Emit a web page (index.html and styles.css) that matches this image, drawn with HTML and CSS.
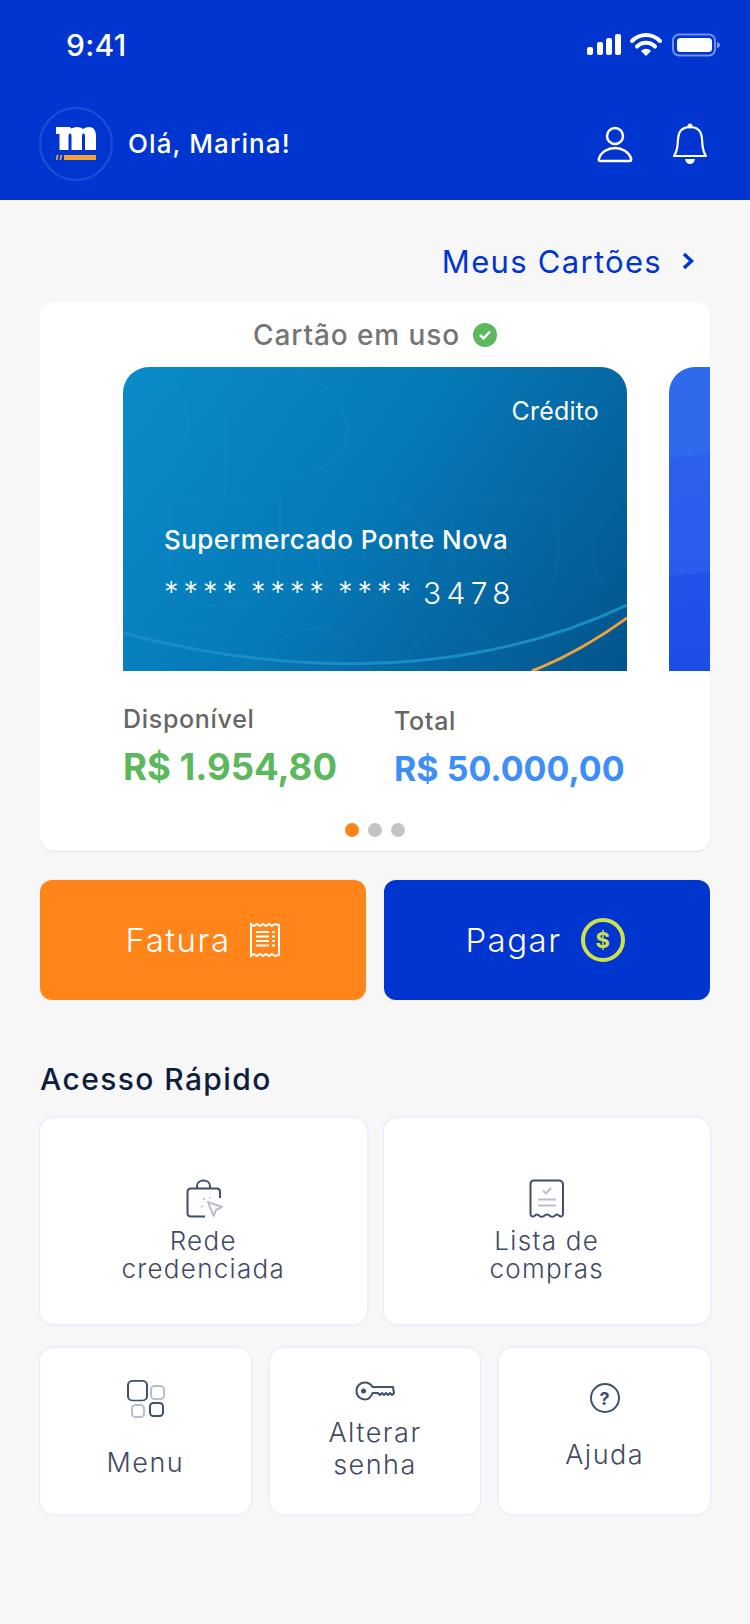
FILE: index.html
```html
<!DOCTYPE html>
<html lang="pt-BR">
<head>
    <meta charset="UTF-8">
    <meta name="viewport" content="width=device-width, initial-scale=1.0">
    <title>Início</title>
    <link rel="stylesheet" href="styles.css">
</head>
<body>

    <header class="topo">
        <div class="status">
            <span class="hora">9:41</span>
            <svg class="status-icons" width="134" height="24" viewBox="0 0 134 24">
                <rect x="1" y="14" width="6" height="8" rx="2" fill="#fff"/>
                <rect x="11" y="9" width="6" height="13" rx="2" fill="#fff"/>
                <rect x="20" y="5" width="6" height="17" rx="2" fill="#fff"/>
                <rect x="29" y="1" width="6" height="21" rx="2" fill="#fff"/>
                <path d="M46 8 C54 0 66 0 74 8" fill="none" stroke="#fff" stroke-width="4" stroke-linecap="round"/>
                <path d="M51 13.5 C56 8.5 64 8.5 69 13.5" fill="none" stroke="#fff" stroke-width="4" stroke-linecap="round"/>
                <path d="M55 18 C58 15 62 15 65 18 L60 23 Z" fill="#fff"/>
                <rect x="87" y="1.5" width="42" height="21" rx="6" fill="none" stroke="#fff" stroke-opacity=".45" stroke-width="2"/>
                <rect x="91" y="5" width="35" height="14" rx="3.5" fill="#fff"/>
                <path d="M131 9 C133 9.5 134 10.5 134 12 C134 13.5 133 14.5 131 15 Z" fill="#fff" fill-opacity=".5"/>
            </svg>
        </div>
        <div class="topo-linha">
            <div class="logo">
                <svg width="40" height="33" viewBox="0 0 40 33">
                    <path d="M0 0 H14 L15 1.500 C17 .5 19 0 21 0 C23.500 0 25.500 .8 27 2 C29 .7 31 0 33 0 C38 0 40 4 40 9 V23 H29 V9.500 C29 7.500 28.500 6.500 27.500 6.500 C26.500 6.500 26 7.500 26 9.500 V23 H15.500 V9.500 C15.500 7.500 15 6.500 14 6.500 C13 6.500 12.500 7.500 12.500 9.500 V23 H3.500 V7 H0 Z" fill="#fff"/>
                    <rect x="8" y="28" width="32" height="5" fill="#f5a23a"/>
                    <path d="M0.500 28 H2.500 L1.500 33 H0 Z M4.500 28 H6.500 L5 33 H3.500 Z" fill="#f5a23a"/>
                </svg>
            </div>
            <span class="ola">Olá, Marina!</span>
            <svg class="ic-perfil" width="36" height="38" viewBox="0 0 36 38">
                <circle cx="18" cy="11" r="8" fill="none" stroke="#fff" stroke-width="2.500"/>
                <path d="M3.500 36 H32.500 C34 36 34.500 35 34 33.500 C32 27 25 23 18 23 C11 23 4 27 2 33.500 C1.500 35 2 36 3.500 36 Z" fill="none" stroke="#fff" stroke-width="2.500"/>
            </svg>
            <svg class="ic-sino" width="36" height="42" viewBox="0 0 36 42">
                <path d="M2 33 H34 C30 27 30.500 22 30 16 C29.500 8 25 4 18 4 C11 4 6.500 8 6 16 C5.500 22 6 27 2 33 Z" fill="none" stroke="#fff" stroke-width="2.200" stroke-linejoin="round"/>
                <circle cx="18" cy="3" r="2.500" fill="#fff"/>
                <path d="M13 36 H23 C22.500 39.500 20.500 41 18 41 C15.500 41 13.500 39.500 13 36 Z" fill="#fff"/>
            </svg>
        </div>
    </header>

    <main class="conteudo">
        <div class="meus-cartoes">
            <span>Meus Cartões</span>
            <svg width="14" height="20" viewBox="0 0 14 20">
                <path d="M3 3 L10.500 10 L3 17" fill="none" stroke="#0035cf" stroke-width="3.500"/>
            </svg>
        </div>

        <section class="painel">
            <div class="em-uso">
                <span>Cartão em uso</span>
                <span class="ok">
                    <svg width="14" height="12" viewBox="0 0 14 12">
                        <path d="M2 6 L5.500 9.500 L12 2.500" fill="none" stroke="#fff" stroke-width="2.500"/>
                    </svg>
                </span>
            </div>

            <div class="carrossel">
                <div class="cartao">
                    <svg class="cartao-fundo" width="504" height="304" viewBox="0 0 504 304">
                        <g fill="none" stroke="#fff" stroke-opacity=".018" stroke-width="2">
                            <circle cx="-2" cy="57" r="66"/>
                            <path d="M102 130 V60 C102 25 130 6 165 6 C200 6 224 40 224 60 C224 90 200 108 165 108"/>
                            <path d="M47 131 H157 V190 C157 220 135 240 102 240 C70 240 47 220 47 190 Z"/>
                            <circle cx="250" cy="186" r="55"/>
                            <path d="M329 131 H435 V190 C435 220 410 240 382 240 C350 240 329 220 329 190 Z"/>
                            <circle cx="525" cy="186" r="55"/>
                            <path d="M22 290 C40 250 85 250 104 290 M145 290 C165 250 225 250 244 304 M285 290 C300 250 355 250 374 285"/>
                        </g>
                        <path d="M0 266 C120 298 320 325 504 238" fill="none" stroke="#1b8cc4" stroke-width="3"/>
                        <path d="M409 304 C445 290 475 272 504 251" fill="none" stroke="#f0a33c" stroke-width="3"/>
                    </svg>
                    <span class="tipo">Crédito</span>
                    <span class="nome">Supermercado Ponte Nova</span>
                    <div class="numero">
                        <span class="estrelas">****</span>
                        <span class="estrelas">****</span>
                        <span class="estrelas">****</span>
                        <span class="final">3478</span>
                    </div>
                </div>
                <div class="cartao cartao-prox"></div>
            </div>

            <div class="valores">
                <div class="valor-disp">
                    <div class="valor-label">Disponível</div>
                    <div class="valor-num verde">R$ 1.954,80</div>
                </div>
                <div class="valor-total">
                    <div class="valor-label">Total</div>
                    <div class="valor-num azul">R$ 50.000,00</div>
                </div>
            </div>

            <div class="pontos">
                <span class="ponto ativo"></span>
                <span class="ponto"></span>
                <span class="ponto"></span>
            </div>
        </section>

        <div class="botoes">
            <button type="button" class="botao laranja">
                <span>Fatura</span>
                <svg width="32" height="36" viewBox="0 0 32 36">
                    <path d="M2 2 L5 4 L8 2 L11 4 L14 2 L17 4 L20 2 L23 4 L26 2 L30 3 V33 L26 34 L23 32 L20 34 L17 32 L14 34 L11 32 L8 34 L5 32 L2 34 Z" fill="none" stroke="#fff" stroke-width="2"/>
                    <path d="M7 10 H20 M7 14.500 H20 M7 19 H20 M7 23.500 H20 M23 10 H26 M23 14.500 H26 M23 19 H26 M23 23.500 H26" stroke="#fff" stroke-width="2"/>
                </svg>
            </button>
            <button type="button" class="botao azul-escuro">
                <span>Pagar</span>
                <span class="moeda">$</span>
            </button>
        </div>

        <h2 class="acesso">Acesso Rápido</h2>

        <div class="grade-dois">
            <a class="bloco bloco-alto">
                <svg class="ic-sacola" width="38" height="40" viewBox="0 0 38 40">
                    <path d="M11 10 V7 C11 3.500 14 1.500 17.500 1.500 C21 1.500 24 3.500 24 7 V10" fill="none" stroke="#3f4f6d" stroke-width="2"/>
                    <path d="M34 19 V13 C34 11 33 9.500 31 9.500 H5 C3 9.500 1.500 11 1.500 13 V34 C1.500 36 3 37.500 5 37.500 H19" fill="none" stroke="#3f4f6d" stroke-width="2"/>
                    <path d="M22 23 L36 28 L30 31 L27.500 37 Z" fill="none" stroke="#b9bfcc" stroke-width="2" stroke-linejoin="round"/>
                    <path d="M17 19 L19 21 M24 18 V19.500 M15 28 L17 27" stroke="#b9bfcc" stroke-width="1.500"/>
                </svg>
                <span class="bloco-texto">Rede<br>credenciada</span>
            </a>
            <a class="bloco bloco-alto">
                <svg width="36" height="40" viewBox="0 0 36 40">
                    <path d="M1.500 5 C1.500 3 3 1.500 5 1.500 H30 C32 1.500 34 3 34 5 V35 C34 37.500 31.500 38 30.500 37 C28.500 35 27 35 25.500 37 C24 38 22.500 38 21 37 C19.500 35 17 35 15 37 C13.500 38 12 38 10.500 37 C9 35 7 35 5.500 37 C4 38 1.500 37.500 1.500 35 Z" fill="none" stroke="#3f4f6d" stroke-width="2"/>
                    <path d="M14 11.500 L17 14.500 L22 9" fill="none" stroke="#b9bfcc" stroke-width="2"/>
                    <path d="M9 20.500 H27 M9 26.500 H27" stroke="#b9bfcc" stroke-width="2"/>
                </svg>
                <span class="bloco-texto">Lista de<br>compras</span>
            </a>
        </div>

        <div class="grade-tres">
            <a class="bloco bloco-menu">
                <svg class="ic-menu" width="38" height="38" viewBox="0 0 38 38">
                    <rect x="1" y="1" width="19" height="24" rx="5" fill="none" stroke="#3f4f6d" stroke-width="2" transform="scale(1 .82)"/>
                    <rect x="24" y="6" width="13" height="13" rx="3.500" fill="none" stroke="#b9bfcc" stroke-width="2"/>
                    <rect x="5" y="25" width="12" height="12" rx="3.500" fill="none" stroke="#b9bfcc" stroke-width="2"/>
                    <rect x="23" y="23" width="13" height="13" rx="3.500" fill="none" stroke="#3f4f6d" stroke-width="2"/>
                </svg>
                <span class="bloco-texto bloco-grande">Menu</span>
            </a>
            <a class="bloco bloco-senha">
                <svg width="40" height="20" viewBox="0 0 40 20">
                    <path d="M1.500 10 C1.500 4.500 5.500 1.500 10 1.500 C13.500 1.500 16 3.500 17.500 6 H38 L39 12 L37 14 L35 12 L33 14 L31 12 L29 14 L27 12 L25 14 L23 12 H17.500 C16 16.500 13.500 18.500 10 18.500 C5.500 18.500 1.500 15.500 1.500 10 Z" fill="none" stroke="#3f4f6d" stroke-width="2" stroke-linejoin="round"/>
                    <circle cx="8.500" cy="10" r="2.500" fill="#3f4f6d"/>
                </svg>
                <span class="bloco-texto bloco-grande">Alterar<br>senha</span>
            </a>
            <a class="bloco bloco-ajuda">
                <span class="ajuda-ic">?</span>
                <span class="bloco-texto bloco-grande">Ajuda</span>
            </a>
        </div>
    </main>

</body>
</html>
```

FILE: styles.css
```css
* {
    box-sizing: border-box;
}

body {
    margin: 0;
    min-height: 1624px;
    background-color: #f7f7f8;
    font-family: Inter, "Noto Sans", sans-serif;
    color: #3f4a63;
}

/* topo azul */
.topo {
    height: 200px;
    background-color: #0035cf;
    padding: 0 29px 0 39px;
}

.status {
    display: flex;
    justify-content: space-between;
    align-items: center;
    height: 90px;
    padding: 0 1px 0 27px;
}

.hora {
    color: white;
    font-size: 30px;
    font-weight: 500;
    letter-spacing: 0.3px;
}

.topo-linha {
    display: flex;
    align-items: center;
    height: 73px;
    margin-top: 17px;
}

.logo {
    width: 74px;
    height: 74px;
    border-radius: 50%;
    border: 2px solid rgba(255, 255, 255, 0.12);
    display: flex;
    justify-content: center;
    align-items: center;
}

.ola {
    flex: 1;
    margin-left: 15px;
    color: white;
    font-size: 26px;
    font-weight: 500;
    letter-spacing: 1.1px;
}

.ic-perfil {
    margin-right: 39px;
}

.ic-sino {
    margin-right: 13px;
}

/* conteudo */
.conteudo {
    padding: 0 40px;
}

.meus-cartoes {
    display: flex;
    justify-content: flex-end;
    align-items: center;
    height: 40px;
    margin-top: 41px;
    padding-right: 15px;
    gap: 19px;
    color: #0035cf;
    font-size: 31px;
    letter-spacing: 1.3px;
}

.painel {
    margin-top: 21px;
    height: 549px;
    background-color: white;
    border-radius: 14px;
    overflow: hidden;
    box-shadow: 0 1px 1px #e4e4e8;
}

.em-uso {
    display: flex;
    justify-content: center;
    align-items: center;
    gap: 13px;
    height: 36px;
    margin-top: 15px;
    color: #757575;
    font-size: 28px;
    font-weight: 500;
    letter-spacing: 0.9px;
}

.ok {
    width: 24px;
    height: 24px;
    border-radius: 50%;
    background-color: #5cb85c;
    display: flex;
    justify-content: center;
    align-items: center;
}

.carrossel {
    display: flex;
    gap: 42px;
    height: 304px;
    margin-top: 14px;
    padding-left: 83px;
}

.cartao {
    position: relative;
    flex: none;
    width: 504px;
    height: 304px;
    padding: 28px 28px 0 41px;
    border-radius: 26px 26px 0 0;
    background: linear-gradient(125deg, #0a8cc9 0%, #067ab8 45%, #03548c 100%);
    color: white;
    display: flex;
    flex-direction: column;
    overflow: hidden;
}

.cartao-prox {
    background: linear-gradient(175deg, #2f69ec 0%, #2f69ec 26%, #2c60ec 26%, #2a5cec 60%, #2252ea 60%, #1d4de8 90%, #173ac6 100%);
}

.cartao-fundo {
    position: absolute;
    top: 0;
    left: 0;
}

.tipo {
    position: relative;
    align-self: flex-end;
    font-size: 25px;
    line-height: 32px;
    letter-spacing: 0.2px;
}

.nome {
    position: relative;
    margin-top: 95px;
    font-size: 26px;
    font-weight: 500;
    line-height: 36px;
    letter-spacing: 0.45px;
}

.numero {
    position: relative;
    display: flex;
    align-items: center;
    margin-top: 16px;
    height: 36px;
    font-weight: 300;
}

.estrelas {
    flex: none;
    width: 72px;
    margin-right: 15px;
    margin-top: -2px;
    font-size: 29px;
    letter-spacing: 5px;
}

.final {
    margin-left: -2px;
    margin-top: 1px;
    font-size: 30px;
    letter-spacing: 5.3px;
}

.valores {
    display: flex;
    margin-top: 32px;
    padding-left: 83px;
}

.valor-disp {
    width: 271px;
}

.valor-total {
    padding-top: 2px;
}

.valor-label {
    color: #666;
    font-size: 25px;
    font-weight: 500;
    line-height: 32px;
    letter-spacing: 0.7px;
}

.valor-num {
    margin-top: 9px;
    font-weight: 700;
    line-height: 46px;
}

.verde {
    color: #5cb85c;
    font-size: 36.5px;
}

.azul {
    color: #3e8ef7;
    font-size: 34px;
}

.pontos {
    display: flex;
    justify-content: center;
    gap: 9px;
    margin-top: 31px;
}

.ponto {
    width: 14px;
    height: 14px;
    border-radius: 50%;
    background-color: #c4c4c4;
}

.ativo {
    background-color: #ff851b;
}

/* botoes */
.botoes {
    display: grid;
    grid-template-columns: 1fr 1fr;
    gap: 18px;
    margin-top: 29px;
}

.botao {
    height: 120px;
    border: none;
    border-radius: 12px;
    color: white;
    font-family: inherit;
    font-size: 33px;
    font-weight: 300;
    letter-spacing: 1.5px;
    cursor: pointer;
    display: flex;
    justify-content: center;
    align-items: center;
    gap: 18px;
}

.laranja {
    background-color: #ff851b;
}

.azul-escuro {
    background-color: #0035cf;
    padding-right: 10px;
    gap: 19px;
}

.moeda {
    width: 44px;
    height: 44px;
    border-radius: 50%;
    border: 4px solid #cfe04a;
    color: #cfe04a;
    font-size: 22px;
    font-weight: 700;
    letter-spacing: 0;
    display: flex;
    justify-content: center;
    align-items: center;
}

/* acesso rapido */
.acesso {
    margin: 59px 0 0;
    height: 40px;
    color: #0f1e3c;
    font-size: 30px;
    font-weight: 500;
    line-height: 40px;
    letter-spacing: 1.4px;
}

.grade-dois {
    display: grid;
    grid-template-columns: 1fr 1fr;
    gap: 13px;
    margin: 17px -2px 0;
}

.grade-tres {
    display: grid;
    grid-template-columns: 1fr 1fr 1fr;
    gap: 15px;
    margin: 20px -2px 0;
}

.bloco {
    display: flex;
    flex-direction: column;
    align-items: center;
    background-color: white;
    border: 2px solid #edf0fa;
    border-radius: 16px;
    text-align: center;
    font-weight: 300;
}

.bloco-alto {
    height: 210px;
    padding-top: 61px;
}

.ic-sacola {
    margin-left: 3px;
}

.ic-menu {
    margin-left: 2px;
}

.bloco-texto {
    margin-top: 8px;
    font-size: 26px;
    line-height: 28px;
    letter-spacing: 1.3px;
}

.bloco-grande {
    font-size: 27px;
    line-height: 32px;
    letter-spacing: 1.5px;
}

.grade-tres .bloco {
    height: 170px;
}

.bloco-menu {
    padding-top: 32px;
}

.bloco-menu .bloco-texto {
    margin-top: 29px;
}

.bloco-senha {
    padding-top: 33px;
}

.bloco-senha .bloco-texto {
    margin-top: 16px;
}

.bloco-ajuda {
    padding-top: 35px;
}

.bloco-ajuda .bloco-texto {
    margin-top: 26px;
}

.ajuda-ic {
    width: 30px;
    height: 30px;
    border-radius: 50%;
    border: 2px solid #3f4f6d;
    color: #3f4f6d;
    font-size: 18px;
    font-weight: 700;
    letter-spacing: 0;
    display: flex;
    justify-content: center;
    align-items: center;
}
```
